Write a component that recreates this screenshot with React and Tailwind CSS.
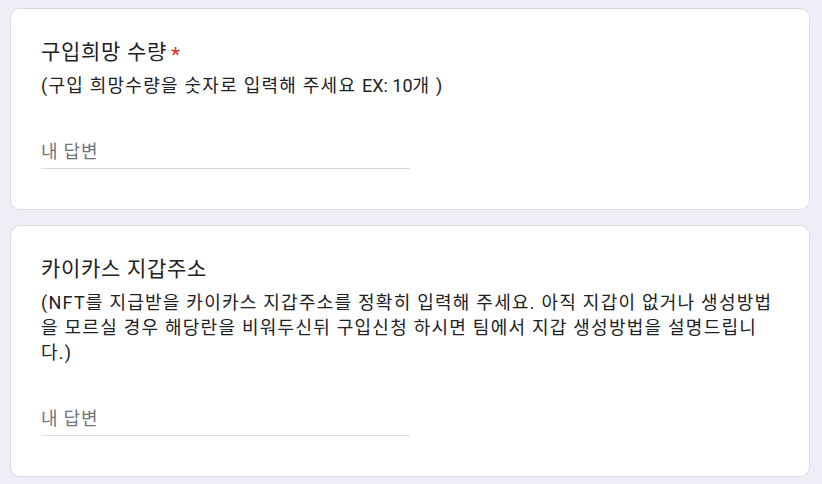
const font = { fontFamily: 'Roboto, "Noto Sans CJK KR", Arial, sans-serif' };

const questions = [
  {
    title: '구입희망 수량',
    required: true,
    description: (
      <>
        (구입 희망수량을 숫자로 입력해 주세요 <span className="tracking-normal">EX: 10</span>개 )
      </>
    ),
  },
  {
    title: '카이카스 지갑주소',
    required: false,
    description:
      '(NFT를 지급받을 카이카스 지갑주소를 정확히 입력해 주세요. 아직 지갑이 없거나 생성방법을 모르실 경우 해당란을 비워두신뒤 구입신청 하시면 팀에서 지갑 생성방법을 설명드립니다.)',
  },
];

const QuestionCard = ({ title, required, description }) => (
  <div className="rounded-[10px] border border-[#dadce0] bg-white px-[30px] pt-[28px] pb-[40px]">
    <div className="text-[21px] leading-[30px] tracking-[0.7px] text-[#202124]">
      {title}
      {required && <span className="relative top-[3px] pl-[4px] text-[#d93025]">*</span>}
    </div>
    <div className="mt-[6px] text-[18px] leading-[25px] tracking-[1.25px] text-[#202124]">{description}</div>
    <div className="mt-[41px] w-1/2 border-b border-[#dadce0] pb-[3px]">
      <input
        placeholder="내 답변"
        className="w-full bg-transparent text-[18px] leading-[25px] tracking-[0.8px] text-[#202124] outline-none placeholder:text-[#70757a]"
        style={font}
      />
    </div>
  </div>
);

const App = () => {
  return (
    <div className="min-h-screen bg-[#efeef6] px-[10px] pt-[8px] pb-[8px]" style={font}>
      <div className="flex w-[800px] flex-col gap-[15px]">
        {questions.map((question) => (
          <QuestionCard key={question.title} {...question} />
        ))}
      </div>
    </div>
  );
};

export default App;
